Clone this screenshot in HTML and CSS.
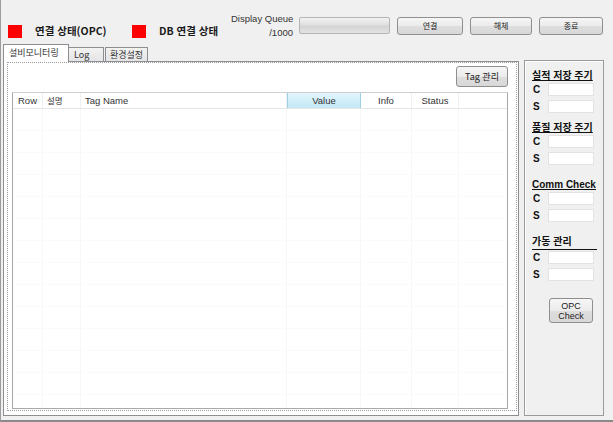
FILE: index.html
```html
<!DOCTYPE html>
<html lang="ko">
<head>
<meta charset="utf-8">
<title>OPC Monitor</title>
<link rel="stylesheet" href="styles.css">
</head>
<body>
<div class="window">
  <div class="topbar">
    <div class="status s1"><span class="led"></span><span class="status-label">연결 상태(OPC)</span></div>
    <div class="status s2"><span class="led"></span><span class="status-label">DB 연결 상태</span></div>
    <div class="queue"><div>Display Queue</div><div>/1000</div></div>
    <div class="progress"></div>
    <button class="btn top-btn b1">연결</button>
    <button class="btn top-btn b2">해체</button>
    <button class="btn top-btn b3">종료</button>
  </div>
  <div class="main">
    <div class="tabs">
      <div class="tab-headers">
        <div class="tab active">설비모니터링</div>
        <div class="tab t-log">Log</div>
        <div class="tab t-env">환경설정</div>
      </div>
      <div class="tab-panel">
        <div class="page">
          <div class="toolbar"><button class="btn tag-btn">Tag 관리</button></div>
          <div class="grid">
            <div class="grid-head">
              <div class="hc c-row">Row</div>
              <div class="hc c-desc">설명</div>
              <div class="hc c-name">Tag Name</div>
              <div class="hc c-value">Value</div>
              <div class="hc c-info">Info</div>
              <div class="hc c-status">Status</div>
              <div class="hc c-rest"></div>
            </div>
            <div class="grid-body">
              <div class="grow"><i></i><i></i><i></i><i></i><i></i><i></i><i></i></div>
              <div class="grow"><i></i><i></i><i></i><i></i><i></i><i></i><i></i></div>
              <div class="grow"><i></i><i></i><i></i><i></i><i></i><i></i><i></i></div>
              <div class="grow"><i></i><i></i><i></i><i></i><i></i><i></i><i></i></div>
              <div class="grow"><i></i><i></i><i></i><i></i><i></i><i></i><i></i></div>
              <div class="grow"><i></i><i></i><i></i><i></i><i></i><i></i><i></i></div>
              <div class="grow"><i></i><i></i><i></i><i></i><i></i><i></i><i></i></div>
              <div class="grow"><i></i><i></i><i></i><i></i><i></i><i></i><i></i></div>
              <div class="grow"><i></i><i></i><i></i><i></i><i></i><i></i><i></i></div>
              <div class="grow"><i></i><i></i><i></i><i></i><i></i><i></i><i></i></div>
              <div class="grow"><i></i><i></i><i></i><i></i><i></i><i></i><i></i></div>
              <div class="grow"><i></i><i></i><i></i><i></i><i></i><i></i><i></i></div>
              <div class="grow"><i></i><i></i><i></i><i></i><i></i><i></i><i></i></div>
              <div class="grow"><i></i><i></i><i></i><i></i><i></i><i></i><i></i></div>
            </div>
          </div>
        </div>
      </div>
    </div>
    <div class="side">
      <div class="section sec1">
        <div class="sec-title">실적 저장 주기</div>
        <div class="field"><span class="flabel">C</span><span class="finput"></span></div>
        <div class="field"><span class="flabel">S</span><span class="finput"></span></div>
      </div>
      <div class="section sec2">
        <div class="sec-title">품질 저장 주기</div>
        <div class="field"><span class="flabel">C</span><span class="finput"></span></div>
        <div class="field"><span class="flabel">S</span><span class="finput"></span></div>
      </div>
      <div class="section sec3">
        <div class="sec-title">Comm Check</div>
        <div class="field"><span class="flabel">C</span><span class="finput"></span></div>
        <div class="field"><span class="flabel">S</span><span class="finput"></span></div>
      </div>
      <div class="section sec4">
        <div class="sec-title line">가동 관리</div>
        <div class="field"><span class="flabel">C</span><span class="finput"></span></div>
        <div class="field"><span class="flabel">S</span><span class="finput"></span></div>
      </div>
      <button class="btn opc-btn">OPC<br>Check</button>
    </div>
  </div>
</div>
</body>
</html>
```
FILE: styles.css
```css
* { box-sizing: border-box; }
body { margin: 0; background: #f0f0f0; }

.window {
  width: 613px;
  height: 422px;
  border-left: 1px solid #9c9c9c;
  border-bottom: 2px solid #8a8a8a;
  background: #f0f0f0;
  font-family: "Liberation Sans", "Noto Sans CJK KR", sans-serif;
  color: #222;
  overflow: hidden;
}

/* top bar */
.topbar { display: flex; align-items: flex-start; height: 44px; }
.status { display: flex; align-items: center; margin-top: 24px; height: 14px; }
.s1 { margin-left: 7px; width: 124px; }
.s2 { width: 99px; }
.led { width: 14px; height: 13px; background: #ff0000; flex: none; }
.status-label {
  font-family: "Noto Sans CJK KR", sans-serif;
  font-weight: bold;
  font-size: 10.5px;
  line-height: 14px;
  margin-left: 13px;
  color: #1a1a1a;
  white-space: nowrap;
}
.queue {
  width: 62px;
  margin-top: 12px;
  font-size: 9.5px;
  line-height: 14px;
  text-align: right;
  color: #333;
  white-space: nowrap;
}
.progress {
  width: 91px;
  height: 17px;
  margin-top: 17px;
  margin-left: 6px;
  border: 1px solid #b4b4b4;
  border-radius: 2px;
  background: linear-gradient(#f2f2f2, #e0e0e0 45%, #d4d4d4 55%, #e2e2e2);
}
.btn {
  font-family: "Noto Sans CJK KR", "Liberation Sans", sans-serif;
  border: 1px solid #8f8f8f;
  border-radius: 3px;
  background: linear-gradient(#f6f6f6, #ebebeb 50%, #dedede 51%, #d8d8d8);
  color: #222;
  padding: 0;
  margin: 0;
}
.top-btn { height: 18px; margin-top: 17px; margin-left: 7px; font-size: 8px; line-height: 16px; }
.b1 { width: 66px; }
.b2 { width: 62px; }
.b3 { width: 64px; }

/* main area */
.main { display: flex; align-items: flex-start; }
.tabs { margin-left: 2px; width: 516px; }
.tab-headers { display: flex; align-items: flex-end; height: 17px; position: relative; z-index: 1; }
.tab {
  height: 14px;
  border: 1px solid #8c8e94;
  border-bottom: none;
  background: linear-gradient(#f3f3f3, #e4e4e4);
  font-family: "Noto Sans CJK KR", "Liberation Sans", sans-serif;
  font-size: 9px;
  line-height: 13px;
  color: #333;
  padding-left: 4px;
  white-space: nowrap;
}
.tab.active {
  height: 18px;
  margin-bottom: -1px;
  width: 66px;
  background: #ffffff;
  line-height: 16px;
  padding-left: 5px;
}
.t-log { width: 35px; margin-left: 0; border-left: none; padding-left: 5px; }
.t-env { width: 43px; margin-left: 1px; }

.tab-panel {
  height: 355px;
  border: 1px solid #8c8e94;
  background: #ffffff;
  padding: 0 1px 4px 3px;
}
.page {
  height: 100%;
  border: 1px dotted #9a9a9a;
  padding: 3px 8px 1px 4px;
  display: flex;
  flex-direction: column;
}
.toolbar { display: flex; justify-content: flex-end; height: 21px; flex: none; }
.tag-btn { width: 52px; height: 21px; font-size: 9px; line-height: 19px; }

.grid {
  margin-top: 5px;
  flex: 1;
  border: 1px solid #a8a8a8;
  border-top-color: #cfcfcf;
  background: #fff;
  display: flex;
  flex-direction: column;
  overflow: hidden;
}
.grid-head, .grow {
  display: grid;
  grid-template-columns: 30px 38px 206px 74px 51px 47px 1fr;
}
.grid-head { height: 16px; border-bottom: 1px solid #e6e6e6; flex: none; }
.hc {
  font-size: 9.5px;
  line-height: 15px;
  color: #333;
  white-space: nowrap;
  border-right: 1px solid #f0f0f0;
}
.c-row { padding-left: 5px; }
.c-desc { padding-left: 4px; font-family: "Noto Sans CJK KR", sans-serif; font-size: 8.5px; }
.c-name { padding-left: 4px; }
.c-value {
  text-align: center;
  background: linear-gradient(#e3f6fc, #c2e8f6);
  border-left: 1px solid #9ed0e4;
  border-right: 1px solid #9ed0e4;
}
.c-info, .c-status { text-align: center; }
.c-rest { border-right: none; }

.grid-body { flex: 1; }
.grow { height: 22px; border-bottom: 1px solid #fafafa; }
.grow i { border-right: 1px solid #f7f7f7; }
.grow i:last-child { border-right: none; }

/* side panel */
.side {
  margin-left: 5px;
  margin-top: 16px;
  width: 80px;
  height: 356px;
  border: 1px solid #9a9a9a;
  box-shadow: inset 1px 1px 0 #ffffff;
  padding: 9px 6px 0 7px;
  display: flex;
  flex-direction: column;
  align-items: flex-start;
}
.section { display: flex; flex-direction: column; }
.sec2 { margin-top: 9px; }
.sec3 { margin-top: 14px; }
.sec4 { margin-top: 14px; }
.sec-title {
  font-family: "Liberation Sans", "Noto Sans CJK KR", sans-serif;
  font-weight: bold;
  font-size: 10px;
  line-height: 12px;
  text-decoration: underline;
  color: #111;
  white-space: nowrap;
}
.sec-title.line {
  text-decoration: none;
  width: 65px;
  height: 14px;
  border-bottom: 1px solid #111;
}
.field { display: flex; align-items: center; height: 13px; margin-top: 4px; }
.sec-title + .field { margin-top: 1px; }
.flabel { width: 16px; padding-left: 1px; font-weight: bold; font-size: 10px; color: #111; }
.finput { width: 46px; height: 13px; background: #fff; border: 1px solid #e2e2e2; }
.opc-btn {
  margin-top: 17px;
  margin-left: 17px;
  width: 44px;
  height: 25px;
  font-family: "Liberation Sans", sans-serif;
  font-size: 9px;
  line-height: 10px;
}
```
